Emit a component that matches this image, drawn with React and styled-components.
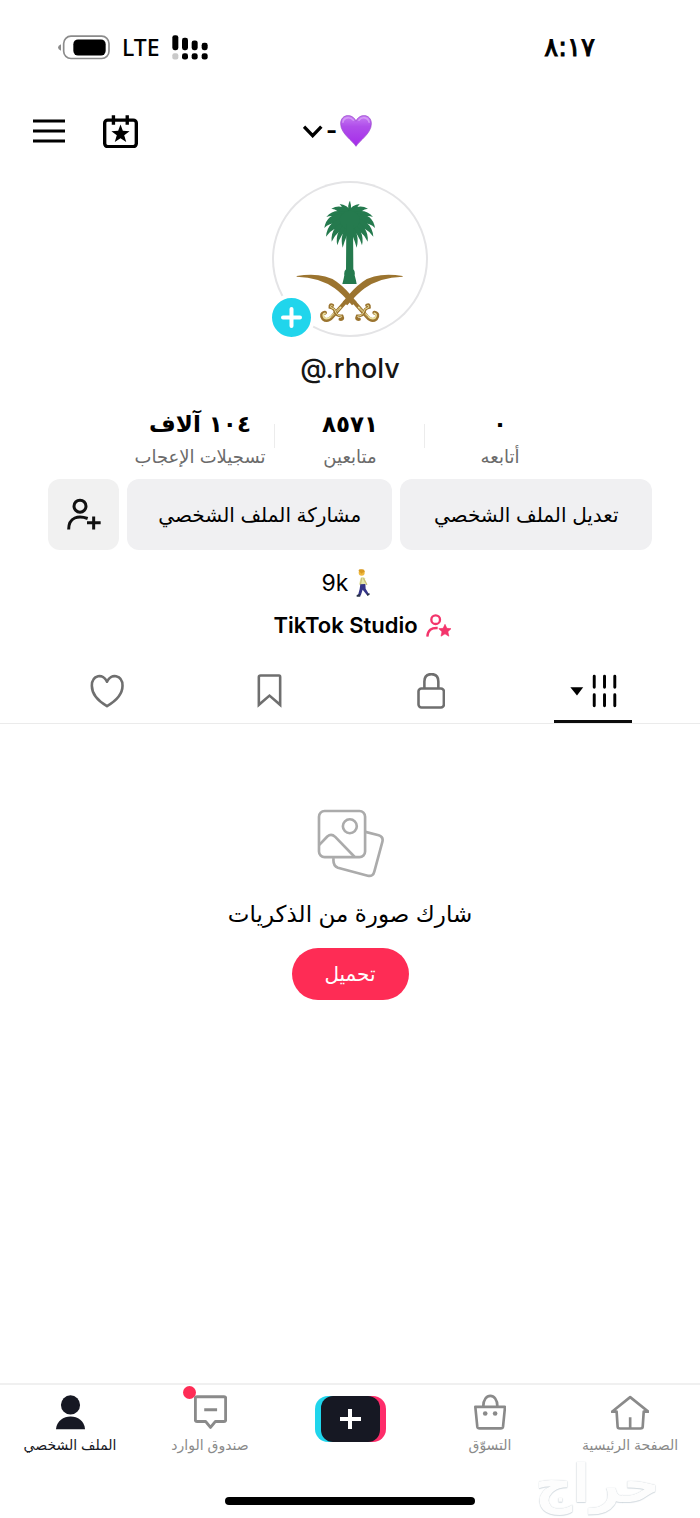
import React from 'react';
import styled, { createGlobalStyle } from 'styled-components';

const GlobalStyle = createGlobalStyle`
  * { box-sizing: border-box; }
  body {
    margin: 0;
    background: #fff;
    color: #000;
    font-family: Inter, "DejaVu Sans", sans-serif;
  }
  button, a { font: inherit; color: inherit; text-decoration: none; }
  button { border: 0; padding: 0; background: none; cursor: pointer; }
  svg { display: block; flex: none; }
`;

const Page = styled.div`
  position: relative;
  min-height: 100vh;
  display: flex;
  flex-direction: column;
  overflow: hidden;
`;

const StatusBar = styled.div`
  height: 94px;
  padding: 0 105px 0 58px;
  display: flex;
  align-items: center;
  justify-content: space-between;
`;

const Clock = styled.time`
  font: 400 26px/32px "DejaVu Sans", sans-serif;
  -webkit-text-stroke: 1px #000;
`;

const StatusIcons = styled.div`
  direction: ltr;
  display: flex;
  align-items: center;
  gap: 12px;
`;

const Network = styled.span`
  font: 500 23px/32px "Noto Sans", sans-serif;
`;

const Header = styled.header`
  height: 74px;
  padding: 0 58px 0 33px;
  display: grid;
  grid-template-columns: 1fr auto 1fr;
  align-items: center;
`;

const AccountSwitch = styled.button`
  grid-column: 2;
  display: flex;
  align-items: center;
  gap: 3px;
  font-size: 24px;
  font-weight: 700;
  line-height: 32px;
`;

const HeaderActions = styled.div`
  grid-column: 3;
  display: flex;
  justify-content: flex-end;
  align-items: center;
  gap: 38px;
`;

const Profile = styled.section`
  display: flex;
  flex-direction: column;
  align-items: center;
  padding-top: 13px;
`;

const Avatar = styled.div`
  position: relative;
  width: 156px;
  height: 156px;
  border-radius: 50%;
  box-shadow: inset 0 0 0 2px #e4e4e6;
`;

const AddPhoto = styled.button`
  position: absolute;
  left: -4px;
  bottom: -4px;
  width: 47px;
  height: 47px;
  border: 4px solid #fff;
  border-radius: 50%;
  background: #20d5ec;
  display: grid;
  place-items: center;
`;

const Username = styled.h1`
  margin: 16px 0 23px;
  direction: ltr;
  font-size: 27px;
  font-weight: 500;
  line-height: 32px;
  color: #161616;
`;

const Stats = styled.div`
  display: flex;
`;

const Stat = styled.a`
  position: relative;
  width: 150px;
  text-align: center;
  white-space: nowrap;
  & + &::before {
    content: "";
    position: absolute;
    right: 0;
    top: 16px;
    height: 24px;
    width: 1px;
    background: #ececec;
  }
`;

const StatValue = styled.strong`
  display: block;
  font: 700 23px/32px "DejaVu Sans", sans-serif;
`;

const StatLabel = styled.span`
  display: block;
  margin-top: 3px;
  font-size: 18px;
  line-height: 28px;
  color: #6b6b6b;
`;

const Actions = styled.div`
  align-self: stretch;
  display: flex;
  gap: 8px;
  padding: 8px 48px 0;
`;

const ActionButton = styled.button`
  flex: ${(p) => p.$grow || '0 0 71px'};
  height: 71px;
  border-radius: 12px;
  background: ${(p) => (p.$grow ? '#f0f0f2' : '#f1f1f1')};
  display: flex;
  align-items: center;
  justify-content: center;
  font-size: 20px;
  white-space: nowrap;
`;

const Bio = styled.p`
  direction: ltr;
  display: flex;
  align-items: center;
  gap: 8px;
  margin: 17px 0 0;
  padding-right: 8px;
  font-size: 23px;
  line-height: 32px;
`;

const StudioLink = styled.a`
  direction: ltr;
  display: flex;
  align-items: center;
  gap: 8px;
  margin-top: 10px;
  padding-left: 24px;
  font-size: 22px;
  font-weight: 600;
  line-height: 32px;
`;

const Tabs = styled.nav`
  display: flex;
  margin-top: 18px;
  padding: 0 26px;
  border-bottom: 1px solid #ebebeb;
`;

const Tab = styled.button`
  flex: 1;
  height: 64px;
  display: flex;
  justify-content: center;
  color: ${(p) => (p.$active ? '#000' : '#6f6f6f')};
`;

const TabInner = styled.span`
  width: 78px;
  height: 64px;
  padding-top: 2px;
  display: grid;
  place-items: center;
  border-bottom: 3px solid ${(p) => (p.$active ? '#0c0c0c' : 'transparent')};
`;

const Empty = styled.main`
  flex: 1;
  display: flex;
  flex-direction: column;
  align-items: center;
  padding: 85px 24px 40px;
`;

const EmptyText = styled.p`
  margin: 20px 0 18px;
  font-size: 23px;
  line-height: 32px;
`;

const UploadButton = styled.button`
  width: 117px;
  height: 52px;
  border-radius: 26px;
  background: #fe2c55;
  color: #fff;
  font-size: 20px;
`;

const BottomNav = styled.nav`
  display: flex;
  border-top: 2px solid #f0f0f0;
  padding-top: 9px;
`;

const NavItem = styled.a`
  flex: 1 1 0;
  display: flex;
  flex-direction: column;
  align-items: center;
  gap: 5px;
  font-size: 14px;
  line-height: 20px;
  white-space: nowrap;
  color: ${(p) => (p.$active ? '#161823' : '#8a8a8a')};
`;

const NavIcon = styled.span`
  position: relative;
  height: 36px;
  display: grid;
  place-items: center;
`;

const CreateIcon = styled(NavIcon)`
  height: 50px;
`;

const Dot = styled.i`
  position: absolute;
  left: -11px;
  top: -8px;
  width: 13px;
  height: 13px;
  border-radius: 50%;
  background: #fe2c55;
`;

const HomeArea = styled.div`
  height: 63px;
  display: flex;
  justify-content: center;
  align-items: flex-end;
  padding-bottom: 13px;
`;

const HomeBar = styled.div`
  width: 250px;
  height: 8px;
  border-radius: 4px;
  background: #000;
`;

const Watermark = styled.div`
  position: absolute;
  right: 40px;
  bottom: 8px;
  font: 700 52px/52px "DejaVu Sans", sans-serif;
  color: #fdfdfd;
  text-shadow: 0 0 1px #b9c3ca, 0 1px 1px #d8dfe4;
  pointer-events: none;
`;

const Battery = () => (
  <svg width="52" height="25" viewBox="52 44 156 74">
    <path d="M61 71q-9 4-9 10t9 10z" fill="#8b8b8b" />
    <rect x="69" y="47" width="136" height="67" rx="22" fill="none" stroke="#8b8b8b" strokeWidth="5" />
    <rect x="98" y="57" width="97" height="48" rx="14" />
  </svg>
);

const Signal = () => (
  <svg width="36" height="25" viewBox="392 44 108 74">
    <rect x="393" y="44" width="18" height="45" rx="7" />
    <rect x="422" y="52" width="18" height="37" rx="7" />
    <rect x="451" y="60" width="18" height="29" rx="7" />
    <rect x="481" y="67" width="18" height="22" rx="7" />
    <rect x="393" y="98" width="18" height="19" rx="6" fill="#c9c9c9" />
    <rect x="422" y="98" width="18" height="19" rx="7" />
    <rect x="451" y="98" width="18" height="19" rx="7" />
    <rect x="481" y="98" width="18" height="19" rx="7" />
  </svg>
);

const PurpleHeart = () => (
  <svg width="32" height="32" viewBox="176 282 98 96">
    <defs>
      <linearGradient id="heart" x1="0" y1="0" x2="0" y2="1">
        <stop offset="0" stopColor="#c77df3" />
        <stop offset=".35" stopColor="#b04eea" />
        <stop offset="1" stopColor="#a52bea" />
      </linearGradient>
    </defs>
    <path d="M225 377C215 360 178 338 178 308c0-32 38-32 47-8 9-24 47-24 47 8 0 30-37 52-47 69z" fill="url(#heart)" stroke="#9440c8" strokeWidth="2" />
    <path d="M185 303c2-15 22-18 32-6M234 297c9-12 28-9 31 6" fill="none" stroke="#dba8f8" strokeWidth="5" strokeLinecap="round" opacity=".7" />
  </svg>
);

const Chevron = () => (
  <svg width="20" height="13" viewBox="70 313 60 39">
    <path d="M73 318l26 27 26-27" fill="none" stroke="#000" strokeWidth="10" />
  </svg>
);

const MenuIcon = () => (
  <svg width="32" height="24" viewBox="-21 300 96 72">
    <path d="M-21 306h96M-21 336h96M-21 366h96" stroke="#000" strokeWidth="9" />
  </svg>
);

const CalendarStar = () => (
  <svg width="35" height="33" viewBox="190 284 104 98">
    <rect x="195" y="299" width="94" height="79" rx="9" fill="none" stroke="#000" strokeWidth="10" />
    <path d="M221 285v28M262 285v28" stroke="#000" strokeWidth="10" />
    <path d="M242 312l7 19 20 1-16 12 6 20-17-11-17 11 6-20-16-12 20-1z" />
  </svg>
);

const fronds = [
  'M170 44Q167 30 172 14Q178 30 176 44',
  'M180 48Q165 26 143 24Q154 36 160 58',
  'M178 52Q150 20 118 38Q140 38 150 68',
  'M172 55Q130 32 103 63Q130 52 150 78',
  'M168 54Q104 46 97 96Q117 74 162 84',
  'M168 62Q106 70 102 122Q121 90 168 92',
  'M168 70Q114 90 119 137Q135 102 170 94',
  'M170 75Q126 104 136 148Q147 112 172 94',
  'M172 80Q141 112 152 155Q163 116 178 92',
];

const Emblem = () => (
  <svg width="156" height="156" viewBox="36 33 468 468">
    <g transform="translate(96 78)">
      <g fill="#257a4e">
        <g id="palm-half">
          {fronds.map((d) => <path key={d} d={d} />)}
        </g>
        <use href="#palm-half" transform="matrix(-1 0 0 1 346 0)" />
        <ellipse cx="173" cy="72" rx="30" ry="28" />
        <path d="M163 84h20l1 136q6 5 4 18 4 14 6 26h-43q4-14 6-26-2-12 5-18z" />
      </g>
      <g id="sword" fill="none" strokeLinecap="round">
        <path d="M186 318L226 363Q240 378 252 368Q262 353 247 350" stroke="#9b742f" strokeWidth="12" />
        <path d="M200 334L228 361Q241 373 250 365Q256 354 247 352" stroke="#eadf9e" strokeWidth="5" />
        <path d="M204 337L228 363" stroke="#9b742f" strokeWidth="2" />
        <path d="M224 328Q233 322 232 334Q217 338 217 348Q214 360 196 360Q190 372 202 370" stroke="#9b742f" strokeWidth="9" />
        <path d="M225 329Q231 325 230 334Q215 338 215 348Q212 358 197 361" stroke="#eadf9e" strokeWidth="3" />
        <path d="M14 240Q92 228 134 257Q162 277 194 318L180 328Q150 293 128 277Q84 244 14 242Z" fill="#9b742f" />
      </g>
      <use href="#sword" transform="matrix(-1 0 0 1 346 0)" />
    </g>
  </svg>
);

const Plus = ({ size, width }) => (
  <svg width={size} height={size} viewBox="0 0 21 21">
    <path d="M10.500 2v17M2 10.500h17" stroke="#fff" strokeWidth={width} strokeLinecap="round" />
  </svg>
);

const AddPerson = () => (
  <svg width="34" height="33" viewBox="80 84 102 98" fill="none" stroke="#111" strokeWidth="9">
    <circle cx="119" cy="108" r="18" />
    <path d="M85 178c0-38 30-43 57-33M160 139v39M140 158h41" />
  </svg>
);

const Walker = () => (
  <svg width="14" height="28" viewBox="48 298 42 84">
    <path d="M62 324q8-5 13 2l1 20-15 4-3-9z" fill="#e5e6ad" />
    <path d="M65 326l-4 19M71 327l9 17" stroke="#c9c27a" strokeWidth="4" strokeLinecap="round" />
    <path d="M61 344l15-1 1 14 9 15-6 3-12-15-6 18-8-1 5-19z" fill="#343486" />
    <path d="M50 376l9-3 2 8H50zM80 374l8-4 1 5-7 4z" fill="#273047" />
    <circle cx="65" cy="309" r="9" fill="#efb83d" />
    <path d="M56 304q-1-6 7-5 12-2 11 8-7 0-9 5z" fill="#d99a22" />
  </svg>
);

const StudioIcon = () => (
  <svg width="25" height="23" viewBox="257 430 75 69">
    <g fill="none" stroke="#f3346b" strokeWidth="7">
      <circle cx="286" cy="447" r="13" />
      <path d="M261 498c1-20 12-27 31-26" />
    </g>
    <path d="M314 461l5.500 12 12.500 1-9.500 9 3 13.500-11.500-7-12 7 3-13.500-9.500-9 13-1z" fill="#f3346b" stroke="#f3346b" strokeWidth="2" strokeLinejoin="round" />
  </svg>
);

const GridIcon = () => (
  <svg width="47" height="34" viewBox="1373 46 128 92">
    <path d="M1374 82h35l-17 22z" />
    <path d="M1439 52v30M1467 52v30M1495 52v30M1439 102v30M1467 102v30M1495 102v30" stroke="currentColor" strokeWidth="8" strokeLinecap="round" />
  </svg>
);

const LockIcon = () => (
  <svg width="28" height="36" viewBox="964 42 76 98" fill="none" stroke="currentColor" strokeWidth="7">
    <rect x="968" y="84" width="69" height="52" rx="8" />
    <path d="M984 84V65q0-20 19-20t19 20v19" />
  </svg>
);

const BookmarkIcon = () => (
  <svg width="25" height="35" viewBox="531 44 68 94" fill="none" stroke="currentColor" strokeWidth="7">
    <path d="M541 50h50q3 0 3 4v76l-29-25-29 25V54q0-4 5-4z" />
  </svg>
);

const HeartIcon = () => (
  <svg width="34" height="34" viewBox="81 46 92 92" fill="none" stroke="currentColor" strokeWidth="7">
    <path d="M127 133C101 118 86 99 86 78c0-30 31-35 41-11 10-24 42-19 42 11 0 21-16 40-42 55z" strokeLinejoin="round" />
  </svg>
);

const PhotosIcon = () => (
  <svg width="67" height="69" viewBox="321 55 202 208" fill="none" stroke="#ababab" strokeWidth="8" strokeLinejoin="round">
    <rect x="327" y="61" width="139" height="139" rx="17" />
    <circle cx="420" cy="107" r="21" />
    <path d="M328 163l24-25q12-10 24 1l58 60M467 124l40 10q15 5 11 20l-24 89q-4 17-20 13l-90-24q-16-6-13-29" />
  </svg>
);

const HomeIcon = () => (
  <svg width="38" height="35" viewBox="780 70 115 105" fill="none" stroke="currentColor" strokeWidth="8" strokeLinejoin="round">
    <path d="M783 120l55-44 55 44h-14l-3 45q0 6-7 6h-62q-7 0-7-6l-3-45zM838 137v34" />
  </svg>
);

const BagIcon = () => (
  <svg width="32" height="36" viewBox="371 70 97 107" fill="none" stroke="currentColor" strokeWidth="8" strokeLinejoin="round">
    <path d="M375 108h90l-6 60q-1 5-7 5h-64q-6 0-7-5zM399 107c0-43 43-43 43 0" />
    <circle cx="405" cy="128" r="7" fill="currentColor" stroke="none" />
    <circle cx="435" cy="128" r="7" fill="currentColor" stroke="none" />
  </svg>
);

const CreateButtonIcon = () => (
  <svg width="71" height="46" viewBox="0 0 71 46">
    <rect width="50" height="46" rx="13" fill="#20d5ec" />
    <rect x="21" width="50" height="46" rx="13" fill="#fe2c6a" />
    <rect x="6" width="59" height="46" rx="12" fill="#161823" />
    <path d="M35 13v20M25 23h21" stroke="#fff" strokeWidth="4" />
  </svg>
);

const InboxIcon = () => (
  <svg width="33" height="34" viewBox="580 76 100 103" fill="none" stroke="currentColor" strokeWidth="9" strokeLinejoin="round">
    <path d="M589 81h82q5 0 5 5v65q0 5-5 5h-26l-15 18-15-18h-26q-5 0-5-5V86q0-5 5-5zM611 121h39" />
  </svg>
);

const PersonIcon = () => (
  <svg width="31" height="35" viewBox="165 70 92 106" fill="currentColor">
    <circle cx="211" cy="100" r="29" />
    <path d="M167 174c4-52 85-52 88 0z" />
  </svg>
);

const stats = [
  { value: '٠', label: 'أتابعه' },
  { value: '٨٥٧١', label: 'متابعين' },
  { value: '١٠٤ آلاف', label: 'تسجيلات الإعجاب' },
];

const tabs = [
  { name: 'المنشورات', Icon: GridIcon, active: true },
  { name: 'خاص', Icon: LockIcon },
  { name: 'المحفوظات', Icon: BookmarkIcon },
  { name: 'الإعجابات', Icon: HeartIcon },
];

export default function App() {
  return (
    <Page dir="rtl" lang="ar">
      <GlobalStyle />
      <StatusBar>
        <Clock>٨:١٧</Clock>
        <StatusIcons>
          <Battery />
          <Network>LTE</Network>
          <Signal />
        </StatusIcons>
      </StatusBar>

      <Header>
        <AccountSwitch aria-label="تبديل الحساب">
          <PurpleHeart />
          <span>-</span>
          <Chevron />
        </AccountSwitch>
        <HeaderActions>
          <button aria-label="التقويم"><CalendarStar /></button>
          <button aria-label="القائمة"><MenuIcon /></button>
        </HeaderActions>
      </Header>

      <Profile>
        <Avatar>
          <Emblem />
          <AddPhoto aria-label="إضافة صورة"><Plus size={21} width={4} /></AddPhoto>
        </Avatar>
        <Username>@.rholv</Username>
        <Stats>
          {stats.map((s) => (
            <Stat key={s.label} href="#">
              <StatValue>{s.value}</StatValue>
              <StatLabel>{s.label}</StatLabel>
            </Stat>
          ))}
        </Stats>
        <Actions>
          <ActionButton $grow="252 1 0">تعديل الملف الشخصي</ActionButton>
          <ActionButton $grow="266 1 0">مشاركة الملف الشخصي</ActionButton>
          <ActionButton aria-label="إضافة أصدقاء"><AddPerson /></ActionButton>
        </Actions>
        <Bio>9k <Walker /></Bio>
        <StudioLink href="#">TikTok Studio <StudioIcon /></StudioLink>
      </Profile>

      <Tabs>
        {tabs.map(({ name, Icon, active }) => (
          <Tab key={name} aria-label={name} $active={active}>
            <TabInner $active={active}><Icon /></TabInner>
          </Tab>
        ))}
      </Tabs>

      <Empty>
        <PhotosIcon />
        <EmptyText>شارك صورة من الذكريات</EmptyText>
        <UploadButton>تحميل</UploadButton>
      </Empty>

      <BottomNav>
        <NavItem href="#"><NavIcon><HomeIcon /></NavIcon>الصفحة الرئيسية</NavItem>
        <NavItem href="#"><NavIcon><BagIcon /></NavIcon>التسوّق</NavItem>
        <NavItem href="#" aria-label="إنشاء"><CreateIcon><CreateButtonIcon /></CreateIcon></NavItem>
        <NavItem href="#"><NavIcon><InboxIcon /><Dot /></NavIcon>صندوق الوارد</NavItem>
        <NavItem href="#" $active><NavIcon><PersonIcon /></NavIcon>الملف الشخصي</NavItem>
      </BottomNav>
      <HomeArea><HomeBar /></HomeArea>
      <Watermark>حراج</Watermark>
    </Page>
  );
}
